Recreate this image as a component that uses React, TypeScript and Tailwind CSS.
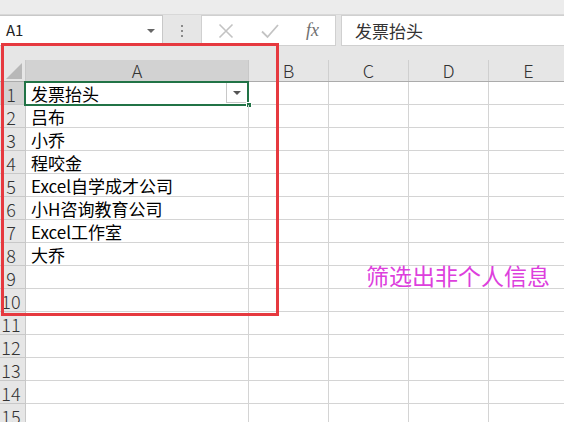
const cols = ["B", "C", "D", "E"];
const data = [
  "发票抬头",
  "吕布",
  "小乔",
  "程咬金",
  "Excel自学成才公司",
  "小H咨询教育公司",
  "Excel工作室",
  "大乔",
  "",
  "",
  "",
  "",
  "",
  "",
  "",
];

const font = { fontFamily: '"Noto Sans CJK SC", "Noto Sans", sans-serif' };

function FormulaBar() {
  return (
    <div className="h-[60px] bg-[#e6e6e6]">
      <div className="h-[15px] border-b border-[#d8d8d8] bg-[#ececec]" />
      <div className="flex h-[31px] items-stretch">
        {/* name box */}
        <div className="flex w-[163px] items-center justify-between border border-l-0 border-[#c8c8c8] bg-white pl-[6px] pr-[7px]">
          <span className="text-[15px] text-[#222]" style={font}>
            A1
          </span>
          <span className="h-0 w-0 border-x-[4px] border-t-[4px] border-x-transparent border-t-[#666]" />
        </div>
        <div className="flex w-[38px] flex-col items-center justify-center gap-[3px]">
          <span className="h-[2px] w-[2px] bg-[#8a8a8a]" />
          <span className="h-[2px] w-[2px] bg-[#8a8a8a]" />
          <span className="h-[2px] w-[2px] bg-[#8a8a8a]" />
        </div>
        {/* cancel / enter / fx */}
        <div className="flex w-[135px] items-center border border-[#d0d0d0] bg-white">
          <svg width="16" height="16" viewBox="0 0 16 16" className="ml-[16px]">
            <path d="M1.5 1.5 14.5 14.5M14.5 1.5 1.5 14.5" stroke="#c3c3c3" strokeWidth="1.6" fill="none" />
          </svg>
          <svg width="18" height="16" viewBox="0 0 18 16" className="ml-[27px]">
            <path d="M1 8.5 6.5 14 17 2" stroke="#c3c3c3" strokeWidth="1.8" fill="none" />
          </svg>
          <span
            className="ml-[27px] text-[18px] italic text-[#6f6f6f]"
            style={{ fontFamily: '"Liberation Serif", serif' }}
          >
            fx
          </span>
        </div>
        <div className="w-[5px]" />
        <div className="flex flex-1 items-center border border-r-0 border-[#d0d0d0] bg-white pl-[13px]">
          <span className="text-[17px] text-[#333]" style={font}>
            发票抬头
          </span>
        </div>
      </div>
    </div>
  );
}

function HeaderRow() {
  return (
    <div className="flex h-[22px] border-b border-[#ababab] bg-[#e6e6e6]" style={font}>
      <div className="relative w-[26px] shrink-0 border-r border-[#c8c8c8]">
        <span className="absolute bottom-[2px] right-[3px] h-0 w-0 border-b-[16px] border-l-[16px] border-b-[#b8b8b8] border-l-transparent" />
      </div>
      <div className="flex w-[223px] shrink-0 items-center justify-center border-r border-[#c8c8c8] bg-[#d2d2d2] text-[18px] font-light text-[#333]">
        A
      </div>
      {cols.map((c) => (
        <div
          key={c}
          className="flex w-[80px] shrink-0 items-center justify-center border-r border-[#cfcfcf] text-[18px] font-light text-[#333]"
        >
          {c}
        </div>
      ))}
    </div>
  );
}

function Row({ n, text }: { n: number; text: string }) {
  const selected = n === 1;
  return (
    <div className="flex h-[23px]" style={font}>
      <div
        className={`flex w-[26px] shrink-0 items-end justify-center border-r border-b border-[#c8c8c8] pr-[3px] text-[18px] font-light leading-[20px] text-[#333] ${
          selected ? "bg-[#d2d2d2]" : "bg-[#e6e6e6]"
        }`}
      >
        {n}
      </div>
      <div className="relative flex w-[223px] shrink-0 items-end border-r border-b border-[#d4d4d4] pl-[5px] text-[17px] leading-[21px] text-black">
        {text}
        {selected && (
          <>
            <div className="absolute -top-[1px] -left-[2px] h-[25px] w-[225px] border-2 border-[#217346]" />
            <div className="absolute right-[2px] top-[1px] flex h-[20px] w-[20px] items-center justify-center border-l border-b border-[#c8c8c8] bg-white">
              <span className="h-0 w-0 border-x-[4px] border-t-[4px] border-x-transparent border-t-[#555]" />
            </div>
            <div className="absolute -bottom-[4px] -right-[4px] h-[6px] w-[6px] border border-white bg-[#217346]" />
          </>
        )}
      </div>
      {cols.map((c) => (
        <div key={c} className="w-[80px] shrink-0 border-r border-b border-[#d4d4d4]" />
      ))}
    </div>
  );
}

export default function App() {
  return (
    <div className="relative h-[422px] w-[564px] overflow-hidden bg-white">
      <FormulaBar />
      <HeaderRow />
      {data.map((t, i) => (
        <Row key={i} n={i + 1} text={t} />
      ))}

      {/* annotation */}
      <div className="absolute left-[1px] top-[43px] h-[273px] w-[278px] border-[3px] border-[#e6393f]" />
      <div
        className="absolute left-[366px] top-[264px] text-[23px] leading-none text-[#dd3fdd]"
        style={font}
      >
        筛选出非个人信息
      </div>
    </div>
  );
}
